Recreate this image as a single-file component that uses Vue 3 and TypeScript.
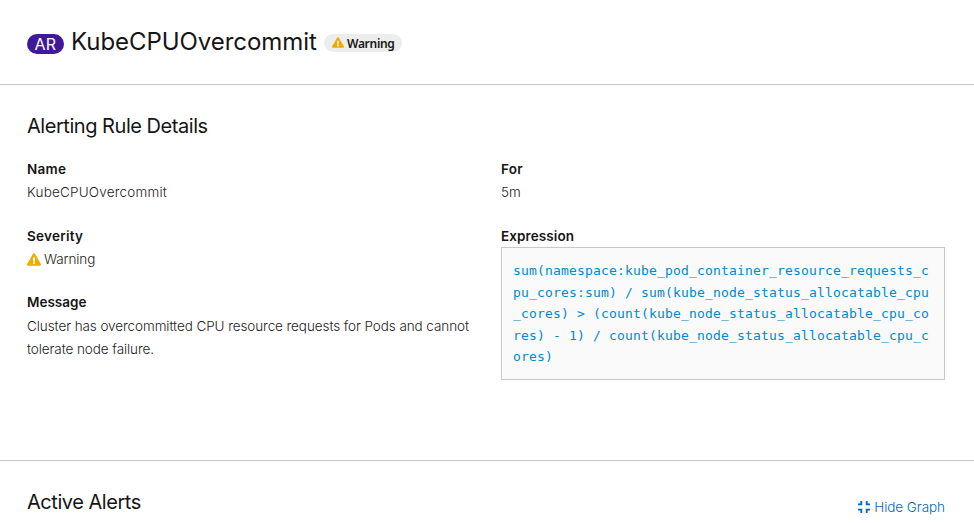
<script setup lang="ts">
const rule = {
  name: 'KubeCPUOvercommit',
  severity: 'Warning',
  message: 'Cluster has overcommitted CPU resource requests for Pods and cannot tolerate node failure.',
  duration: '5m',
  expression:
    'sum(namespace:kube_pod_container_resource_requests_cpu_cores:sum) / sum(kube_node_status_allocatable_cpu_cores) > (count(kube_node_status_allocatable_cpu_cores) - 1) / count(kube_node_status_allocatable_cpu_cores)',
}
const warningPath =
  'M569.5 440c18.500 32-4.700 72-41.600 72H48.100c-36.900 0-60-40.100-41.600-72L246.400 24c18.500-32 64.700-32 83.200 0l239.900 416zM288 354c-25.400 0-46 20.600-46 46s20.600 46 46 46 46-20.600 46-46-20.600-46-46-46zm-43.700-165.300l7.400 136c.4 6.400 5.600 11.300 12 11.300h48.500c6.400 0 11.600-5 12-11.300l7.400-136c.4-6.900-5.100-12.700-12-12.700h-63.400c-6.900 0-12.300 5.800-11.900 12.700z'
</script>

<template>
  <main class="page">
    <header class="masthead">
      <h1 class="title">
        <span class="resource-icon">AR</span>
        <span class="resource-name">{{ rule.name }}</span>
        <span class="badge">
          <svg class="badge-icon" viewBox="0 0 576 512" aria-hidden="true"><path :d="warningPath" /></svg>
          <span>{{ rule.severity }}</span>
        </span>
      </h1>
    </header>

    <section class="details">
      <h2 class="heading">Alerting Rule Details</h2>
      <div class="columns">
        <dl class="list">
          <dt>Name</dt>
          <dd class="name">{{ rule.name }}</dd>
          <dt>Severity</dt>
          <dd class="severity">
            <svg class="severity-icon" viewBox="0 0 576 512" aria-hidden="true"><path :d="warningPath" /></svg>
            <span>{{ rule.severity }}</span>
          </dd>
          <dt class="message-label">Message</dt>
          <dd class="message">{{ rule.message }}</dd>
        </dl>
        <dl class="list">
          <dt>For</dt>
          <dd class="duration">{{ rule.duration }}</dd>
          <dt class="expression-label">Expression</dt>
          <dd><pre class="expression">{{ rule.expression }}</pre></dd>
        </dl>
      </div>
    </section>

    <section class="alerts">
      <h2 class="heading">Active Alerts</h2>
      <button class="link" type="button">
        <svg class="compress" viewBox="0 0 12 12" aria-hidden="true">
          <path d="M0 3.300h3.300V0M8.700 0v3.300H12M0 8.700h3.300V12M8.700 12V8.700H12" />
        </svg>
        <span>Hide Graph</span>
      </button>
    </section>
  </main>
</template>

<style>
body {
  margin: 0;
  background: #fff;
  overflow: hidden;
}
</style>

<style scoped>
.page {
  height: 523px;
  overflow: hidden;
  color: #151515;
  font-family: Inter, 'Liberation Sans', sans-serif;
  font-size: 13.5px;
  line-height: 23px;
}
h1, h2, dl, dd, pre {
  margin: 0;
}
.masthead {
  height: 84px;
  box-sizing: border-box;
  padding: 24px 27px 0;
}
.title {
  display: flex;
  align-items: flex-start;
  font-weight: 400;
}
.resource-icon {
  width: 37px;
  height: 20px;
  margin: 10px 7px 0 0;
  border-radius: 10px;
  background: #40199a;
  color: #fff;
  font-size: 16px;
  letter-spacing: 0.4px;
  line-height: 20px;
  text-align: center;
}
.resource-name {
  width: 246px;
  font-size: 24px;
  letter-spacing: -0.06px;
  line-height: 35px;
  white-space: nowrap;
}
.badge {
  display: flex;
  align-items: center;
  gap: 3px;
  width: 78px;
  height: 18px;
  margin: 10px 0 0 7px;
  padding-left: 8px;
  box-sizing: border-box;
  border-radius: 9px;
  background: #ededed;
  font: 600 12px/20px 'Noto Sans', sans-serif;
  letter-spacing: -0.3px;
}
.badge span {
  padding-top: 1px;
}
.badge-icon {
  width: 12px;
  height: 11px;
  margin-bottom: 1px;
  fill: #f0ab00;
}
.details {
  height: 347px;
  padding: 28px 29px 0 27px;
  border-top: 1px solid #c7c7c7;
}
.heading {
  font-size: 20px;
  font-weight: 400;
  letter-spacing: -0.46px;
  line-height: 26px;
}
.columns {
  display: grid;
  grid-template-columns: 444px 444px;
  column-gap: 30px;
  margin-top: 19px;
}
dt {
  font-weight: 600;
  letter-spacing: 0.25px;
  line-height: 23px;
}
dd {
  min-height: 23px;
  margin-bottom: 21px;
  color: #1c1c1c;
  font-weight: 350;
}
.name {
  letter-spacing: 0.2px;
}
.severity {
  display: flex;
  align-items: center;
  gap: 3px;
  margin-bottom: 20px;
  letter-spacing: -0.1px;
}
.severity-icon {
  width: 14px;
  height: 13px;
  margin-bottom: 1px;
  fill: #f0ab00;
}
.message-label {
  margin-bottom: 1px;
  letter-spacing: 0;
}
.message {
  letter-spacing: -0.08px;
}
.duration {
  margin-bottom: 20px;
}
.expression-label {
  height: 22px;
  padding-top: 1px;
  letter-spacing: 0.1px;
  line-height: 22px;
}
.expression {
  box-sizing: border-box;
  height: 133px;
  padding: 12px 11px;
  border: 1px solid #c9c9c9;
  background: #fafafa;
  color: #0088ce;
  font: 13px/21.500px 'DejaVu Sans Mono', monospace;
  letter-spacing: 0.174px;
  white-space: pre-wrap;
  word-break: break-all;
}
.alerts {
  display: flex;
  justify-content: space-between;
  align-items: flex-start;
  padding: 28px 29px 0 27px;
  border-top: 1px solid #c7c7c7;
}
.link {
  display: flex;
  align-items: center;
  gap: 4px;
  margin-top: 7px;
  padding: 0;
  border: 0;
  background: none;
  color: #06c;
  font: inherit;
  font-weight: 350;
  letter-spacing: -0.05px;
  line-height: 23px;
}
.compress {
  width: 12px;
  height: 12px;
  margin-bottom: 1px;
  fill: none;
  stroke: #06c;
  stroke-width: 1.8;
}
</style>
